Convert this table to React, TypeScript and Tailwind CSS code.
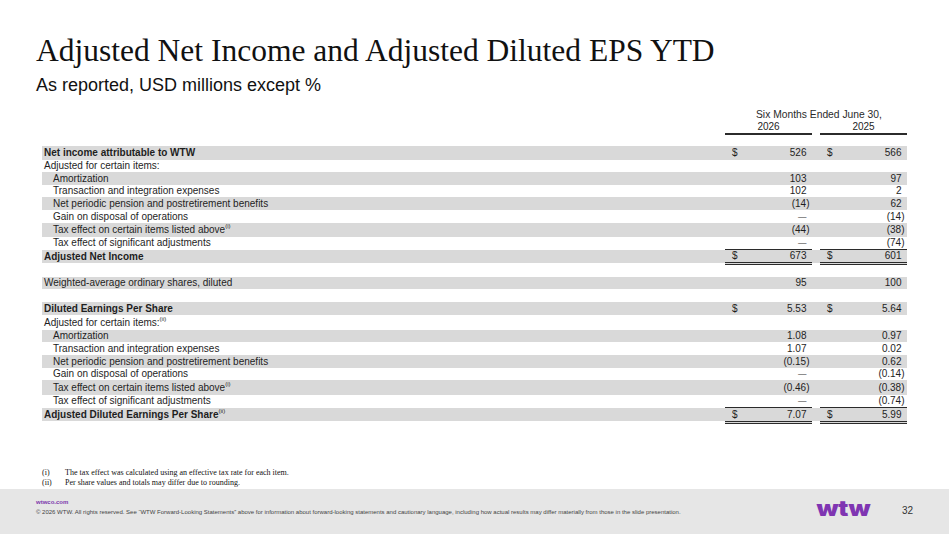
type Row = {
  label?: string;
  sup?: string;
  indent?: boolean;
  bold?: boolean;
  gray?: boolean;
  h: string;
  a?: string;
  b?: string;
  dollar?: boolean;
  total?: boolean;
};

const rows: Row[] = [
  { label: 'Net income attributable to WTW', bold: true, gray: true, h: 'h-[14px]', a: '526', b: '566', dollar: true },
  { label: 'Adjusted for certain items:', h: 'h-[12px]' },
  { label: 'Amortization', indent: true, gray: true, h: 'h-[13px]', a: '103', b: '97' },
  { label: 'Transaction and integration expenses', indent: true, h: 'h-[12px]', a: '102', b: '2' },
  { label: 'Net periodic pension and postretirement benefits', indent: true, gray: true, h: 'h-[13px]', a: '(14)', b: '62' },
  { label: 'Gain on disposal of operations', indent: true, h: 'h-[13px]', a: '—', b: '(14)' },
  { label: 'Tax effect on certain items listed above', sup: '(i)', indent: true, gray: true, h: 'h-[14px]', a: '(44)', b: '(38)' },
  { label: 'Tax effect of significant adjustments', indent: true, h: 'h-[12px]', a: '—', b: '(74)' },
  { label: 'Adjusted Net Income', bold: true, gray: true, total: true, h: 'h-[16px]', a: '673', b: '601', dollar: true },
  { h: 'h-[12px]' },
  { label: 'Weighted-average ordinary shares, diluted', gray: true, h: 'h-[12px]', a: '95', b: '100' },
  { h: 'h-[13px]' },
  { label: 'Diluted Earnings Per Share', bold: true, gray: true, h: 'h-[13px]', a: '5.53', b: '5.64', dollar: true },
  { label: 'Adjusted for certain items:', sup: '(ii)', h: 'h-[15px]' },
  { label: 'Amortization', indent: true, gray: true, h: 'h-[12px]', a: '1.08', b: '0.97' },
  { label: 'Transaction and integration expenses', indent: true, h: 'h-[13px]', a: '1.07', b: '0.02' },
  { label: 'Net periodic pension and postretirement benefits', indent: true, gray: true, h: 'h-[13px]', a: '(0.15)', b: '0.62' },
  { label: 'Gain on disposal of operations', indent: true, h: 'h-[12px]', a: '—', b: '(0.14)' },
  { label: 'Tax effect on certain items listed above', sup: '(i)', indent: true, gray: true, h: 'h-[15px]', a: '(0.46)', b: '(0.38)' },
  { label: 'Tax effect of significant adjustments', indent: true, h: 'h-[12px]', a: '—', b: '(0.74)' },
  { label: 'Adjusted Diluted Earnings Per Share', sup: '(ii)', bold: true, gray: true, total: true, h: 'h-[17px]', a: '7.07', b: '5.99', dollar: true },
];

function Cell({ value, dollar, total }: { value?: string; dollar?: boolean; total?: boolean }) {
  const neg = value?.startsWith('(');
  return (
    <div
      className={`w-[87px] flex items-center justify-between pl-[7px] ${neg ? 'pr-[2.5px]' : 'pr-[5.5px]'} ${
        total ? 'h-full box-border border-t border-b-[3px] border-double border-[#2b2b2b] bg-[#d9d9d9]' : ''
      }`}
      style={total ? { borderTopStyle: 'solid' } : undefined}
    >
      <span>{dollar ? '$' : ''}</span>
      <span>{value === '—' ? <span className="text-[8.5px] text-[#333]">—</span> : value}</span>
    </div>
  );
}

function Label({ row }: { row: Row }) {
  return (
    <div className={`w-[683px] flex items-center ${row.indent ? 'pl-[11px]' : 'pl-[2px]'} ${row.bold ? 'font-bold' : ''}`}>
      {row.label}
      {row.sup && <sup className="text-[6px] font-normal -top-[4px]">{row.sup}</sup>}
    </div>
  );
}

export default function App() {
  return (
    <div className="w-[949px] h-[534px] bg-white flex flex-col overflow-hidden text-[#1e1e1e] font-['Liberation_Sans',Arial,sans-serif]">
      <h1 className="mt-[35px] pl-[36px] text-[31.5px] leading-[32px] font-['Liberation_Serif','Times_New_Roman',serif] text-[#111]">
        Adjusted Net Income and Adjusted Diluted EPS YTD
      </h1>
      <div className="mt-[8px] pl-[36px] text-[18px] leading-[20px] text-[#111]">As reported, USD millions except %</div>

      <div className="ml-[42px] w-[865px] mt-[14px] text-[10px]">
        <div className="flex">
          <div className="w-[683px]" />
          <div className="w-[182px] pl-[31px] text-[10.3px] leading-[12px] text-[#2a2a2a] whitespace-nowrap">Six Months Ended June 30,</div>
        </div>
        <div className="flex">
          <div className="w-[683px]" />
          <div className="w-[87px] h-[14px] leading-[12px] text-center border-b-2 border-[#2b2b2b] box-border">2026</div>
          <div className="w-[8px]" />
          <div className="w-[87px] h-[14px] leading-[12px] text-center border-b-2 border-[#2b2b2b] box-border">2025</div>
        </div>
        <div className="mt-[11px] leading-[12px]">
          {rows.map((row, i) =>
            row.total ? (
              <div key={i} className={`flex items-start ${row.h}`}>
                <div className="h-[13px] mt-[1px] bg-[#d9d9d9] flex">
                  <Label row={row} />
                </div>
                <Cell value={row.a} dollar={row.dollar} total />
                <div className="w-[8px] h-[13px] mt-[1px] bg-[#d9d9d9]" />
                <Cell value={row.b} dollar={row.dollar} total />
              </div>
            ) : (
              <div key={i} className={`flex ${row.h} ${row.gray ? 'bg-[#d9d9d9]' : ''}`}>
                {row.label && (
                  <>
                    <Label row={row} />
                    <Cell value={row.a} dollar={row.dollar} />
                    <div className="w-[8px]" />
                    <Cell value={row.b} dollar={row.dollar} />
                  </>
                )}
              </div>
            )
          )}
        </div>
      </div>

      <div className="mt-[44px] pl-[42px] text-[8px] leading-[9.5px] font-['Liberation_Serif','Times_New_Roman',serif] text-[#111]">
        <div className="flex">
          <span className="w-[23px]">(i)</span>
          <span>The tax effect was calculated using an effective tax rate for each item.</span>
        </div>
        <div className="flex">
          <span className="w-[23px]">(ii)</span>
          <span>Per share values and totals may differ due to rounding.</span>
        </div>
      </div>

      <footer className="mt-auto h-[45px] bg-[#e6e6e6] flex items-start">
        <div className="pl-[36px] pt-[9px]">
          <div className="text-[6px] leading-[8px] font-bold text-[#7c3aad]">wtwco.com</div>
          <div className="mt-[2px] text-[6px] leading-[8px] text-[#444] whitespace-nowrap">
            © 2026 WTW. All rights reserved. See “WTW Forward-Looking Statements” above for information about forward-looking statements and cautionary language, including how actual results may differ materially from those in the slide presentation.
          </div>
        </div>
        <div className="ml-auto flex items-center pt-[9px]">
          <div className="text-[21px] leading-[22px] font-black tracking-[-0.3px] text-[#7f35b2] font-['Inter','Liberation_Sans',sans-serif] scale-x-[1.2]">
            wtw
          </div>
          <div className="ml-[36px] mr-[36px] text-[10px] text-[#333] pt-[2px]">32</div>
        </div>
      </footer>
    </div>
  );
}
